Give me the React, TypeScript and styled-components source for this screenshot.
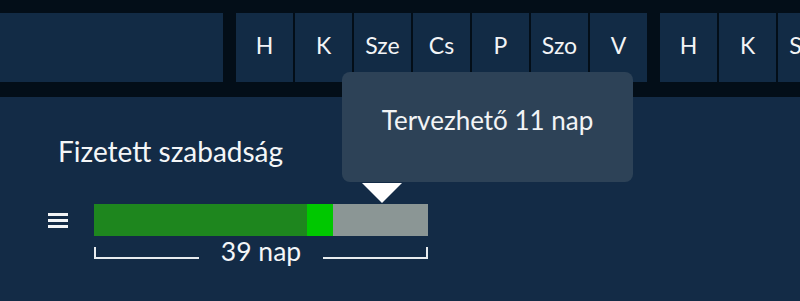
import React from "react";
import styled, { createGlobalStyle } from "styled-components";

const GlobalStyle = createGlobalStyle`
  html, body {
    margin: 0;
    padding: 0;
    background: #030e18;
    font-family: Lato, "Open Sans", sans-serif;
    overflow: hidden;
  }
`;

const Page = styled.div`
  position: relative;
  width: 800px;
  height: 301px;
  overflow: hidden;
  background: #030e18;
`;

const Header = styled.div`
  display: flex;
  padding: 13px 0 15px 0;
  gap: 13px;
  width: 800px;
  overflow: hidden;
`;

const TitleCell = styled.div`
  flex-shrink: 0;
  width: 223px;
  height: 69px;
  background: #122b45;
`;

const Week = styled.div`
  display: flex;
  flex-shrink: 0;
  gap: 2px;
`;

const DayCell = styled.div`
  flex-shrink: 0;
  width: 57px;
  height: 69px;
  background: #122b45;
  color: #f2f4f6;
  font-size: 23px;
  display: flex;
  align-items: center;
  justify-content: center;
  padding-bottom: 6px;
  box-sizing: border-box;
`;

const Panel = styled.div`
  background: #132b46;
  height: 204px;
  padding-top: 37px;
  box-sizing: border-box;
`;

const Title = styled.div`
  margin-left: 58px;
  color: #f4f6f8;
  font-size: 28px;
  line-height: 34px;
`;

const BarRow = styled.div`
  display: flex;
  align-items: center;
  margin-top: 36px;
  margin-left: 48px;
  gap: 26px;
`;

const Menu = styled.div`
  display: flex;
  flex-direction: column;
  gap: 3px;
  width: 20px;
  span {
    display: block;
    height: 3px;
    background: #f2f4f6;
  }
`;

const Bar = styled.div`
  display: flex;
  width: 334px;
  height: 32px;
`;

const Segment = styled.div<{ $color: string; $w: number }>`
  width: ${(p) => p.$w}px;
  background: ${(p) => p.$color};
`;

const Span = styled.div`
  display: flex;
  align-items: center;
  width: 334px;
  margin-left: 94px;
  margin-top: 0;
  gap: 22px;
`;

const Bracket = styled.div<{ $side: "left" | "right" }>`
  flex: 1;
  height: 10px;
  margin-top: 4px;
  border-bottom: 2px solid #e8ecef;
  ${(p) => (p.$side === "left" ? "border-left" : "border-right")}: 2px solid #e8ecef;
`;

const SpanLabel = styled.div`
  color: #f4f6f8;
  font-size: 26.5px;
  line-height: 30px;
`;

const Tooltip = styled.div`
  position: absolute;
  left: 342px;
  top: 72px;
  width: 291px;
  height: 110px;
  background: #2d4257;
  border-radius: 8px;
  color: #f2f4f6;
  font-size: 26px;
  display: flex;
  justify-content: center;
  padding-top: 32px;
  box-sizing: border-box;
`;

const Arrow = styled.div`
  position: absolute;
  left: 362px;
  top: 183px;
  width: 0;
  height: 0;
  border-left: 20px solid transparent;
  border-right: 20px solid transparent;
  border-top: 20px solid #ffffff;
`;

const weeks = [
  ["H", "K", "Sze", "Cs", "P", "Szo", "V"],
  ["H", "K", "Sze"],
];

export default function App() {
  return (
    <Page>
      <GlobalStyle />
      <Header>
        <TitleCell />
        {weeks.map((days, i) => (
          <Week key={i}>
            {days.map((d, j) => (
              <DayCell key={j}>{d}</DayCell>
            ))}
          </Week>
        ))}
      </Header>
      <Panel>
        <Title>Fizetett szabadság</Title>
        <BarRow>
          <Menu>
            <span />
            <span />
            <span />
          </Menu>
          <Bar>
            <Segment $color="#1e861e" $w={213} />
            <Segment $color="#00c800" $w={26} />
            <Segment $color="#8b9695" $w={95} />
          </Bar>
        </BarRow>
        <Span>
          <Bracket $side="left" />
          <SpanLabel>39 nap</SpanLabel>
          <Bracket $side="right" />
        </Span>
      </Panel>
      <Tooltip>Tervezhető 11 nap</Tooltip>
      <Arrow />
    </Page>
  );
}
